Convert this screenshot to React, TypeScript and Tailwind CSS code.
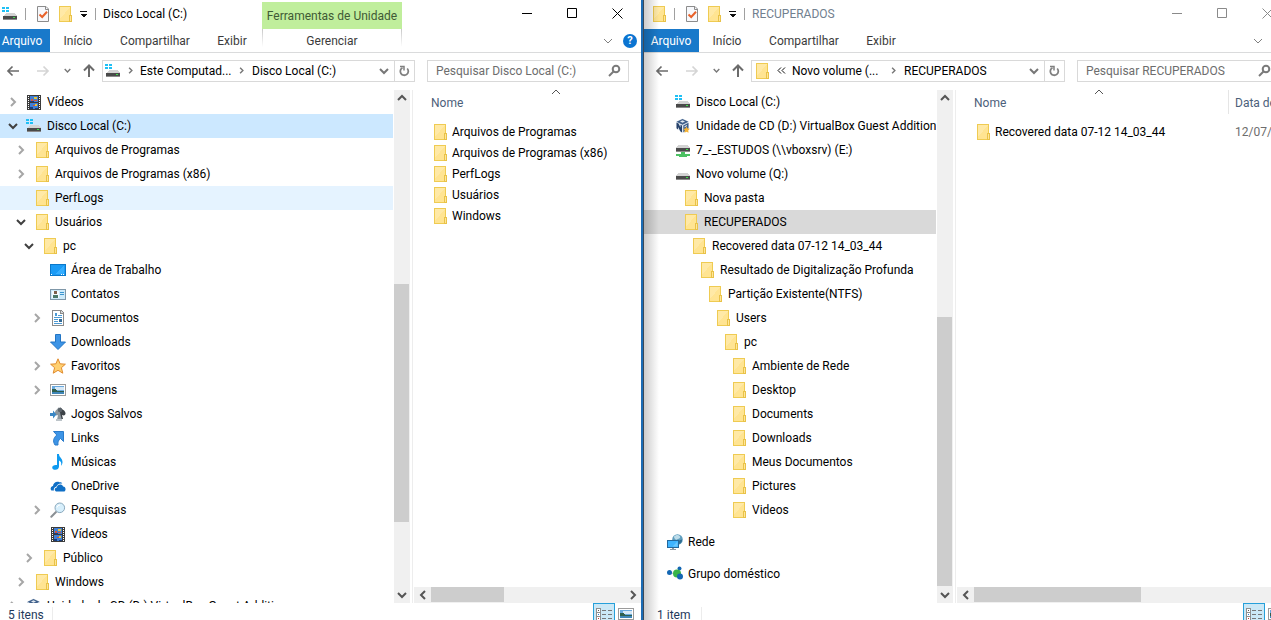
import type { ReactNode } from "react";

type IconName =
  | "folder"
  | "systemDrive"
  | "drive"
  | "netDrive"
  | "vbox"
  | "video"
  | "desktop"
  | "contacts"
  | "document"
  | "download"
  | "star"
  | "picture"
  | "games"
  | "link"
  | "music"
  | "onedrive"
  | "search"
  | "network"
  | "homegroup";

interface TreeItem {
  label: string;
  icon: IconName;
  depth: number;
  state?: "open" | "closed";
  tone?: "selected" | "hover" | "inactive";
  spaced?: boolean;
}

interface ExplorerProps {
  title: string;
  titleIcon: IconName;
  active: boolean;
  driveTools?: boolean;
  crumbs: string[];
  overflowCrumb?: boolean;
  tree: TreeItem[];
  columns: string;
  files: { name: string; date?: string }[];
  showDate?: boolean;
  status: string;
  vThumb: { top: number; size: number };
  hThumb: number;
}

const ICONS: Record<IconName, ReactNode> = {
  folder: (
    <g shapeRendering="crispEdges">
      <rect x="2" y="0" width="12" height="16" fill="#efcb52" />
      <rect x="3" y="1" width="10" height="14" fill="#ffe492" />
      <path d="M3 1h10L3 13z" fill="#ffe9a6" />
      <rect x="12" y="9" width="3" height="7" fill="#e9c248" />
      <rect x="13" y="10" width="1" height="5" fill="#ffe699" />
    </g>
  ),
  systemDrive: (
    <g shapeRendering="crispEdges">
      <path d="M0 1h3v2H0zM4 1h3v2H4zM0 4h3v2H0zM4 4h3v2H4z" fill="#1fc0f5" />
      <path d="M4 7h9l2 3H1z" fill="#d3d3d3" />
      <rect x="1" y="10" width="14" height="4" fill="#4a4a4a" />
      <rect x="1" y="13" width="14" height="1" fill="#8b8b8b" />
      <rect x="11" y="11" width="2" height="1" fill="#3ee04a" />
    </g>
  ),
  drive: (
    <g shapeRendering="crispEdges">
      <path d="M3 7h10l2 3H1z" fill="#d3d3d3" />
      <rect x="1" y="10" width="14" height="4" fill="#4a4a4a" />
      <rect x="1" y="13" width="14" height="1" fill="#8b8b8b" />
      <rect x="11" y="11" width="2" height="1" fill="#3ee04a" />
    </g>
  ),
  netDrive: (
    <g shapeRendering="crispEdges">
      <path d="M3 3h10l2 3H1z" fill="#d3d3d3" />
      <rect x="1" y="6" width="14" height="4" fill="#4a4a4a" />
      <rect x="1" y="9" width="14" height="1" fill="#8b8b8b" />
      <rect x="11" y="7" width="2" height="1" fill="#3ee04a" />
      <path d="M6 10h4v2h5v2h-3v1H4v-1H1v-2h5z" fill="#4cc163" />
    </g>
  ),
  vbox: (
    <g>
      <path d="M7.500 0.500L13.500 3.500V10L7.500 15L1.500 10.500V3.500Z" fill="#dfe7ef" />
      <path d="M7.500 1L13.500 3.800L7.500 6.800L1.500 3.800Z" fill="#3f5f8a" />
      <path d="M5 3.500L7.500 2.300L10 3.500L7.500 4.800Z" fill="#dfe7ef" />
      <path d="M1.500 4.500L3.500 5.500L5.500 9.500V6.800L7 7.500V14.500L5.500 13.500L3 9V11.500L1.500 10.300Z" fill="#27426b" />
      <path d="M8.300 7.500L13.500 4.800V10.500L8.300 14.500Z" fill="#3f5f8a" />
      <path d="M9.500 8.200L12 7V8L9.500 9.500Z" fill="#dfe7ef" />
      <path d="M11.500 8.500l1.100 2 2.200.3-1.600 1.600.4 2.300-2.100-1-2.100 1 .4-2.300-1.600-1.600 2.200-.3z" fill="#f5b335" />
    </g>
  ),
  video: (
    <g shapeRendering="crispEdges">
      <rect x="1" y="1" width="14" height="15" fill="#3b3b3b" />
      <path
        d="M2 2h1v1H2zM2 4h1v1H2zM2 6h1v1H2zM2 8h1v1H2zM2 10h1v1H2zM2 12h1v1H2zM2 14h1v1H2zM13 2h1v1h-1zM13 4h1v1h-1zM13 6h1v1h-1zM13 8h1v1h-1zM13 10h1v1h-1zM13 12h1v1h-1zM13 14h1v1h-1z"
        fill="#fff"
      />
      <rect x="4" y="2" width="8" height="6" fill="#3f7fd6" />
      <rect x="4" y="9" width="8" height="6" fill="#3f7fd6" />
      <path d="M8 3h3v2H8zM9 10h2v2H9z" fill="#e8c63a" />
      <path d="M5 5h2v2H5zM8 6h3v1H8zM7 11h2v1H7z" fill="#d4543b" />
      <path d="M4 7h4v1H4zM4 13h3v2H4zM9 14h3v1H9z" fill="#183d7c" />
    </g>
  ),
  desktop: (
    <g shapeRendering="crispEdges">
      <rect x="0" y="2" width="16" height="12" fill="#0b78c9" />
      <rect x="1" y="3" width="14" height="10" fill="#1b9bf5" />
      <path d="M14 3L5 12h9z" fill="#35aeff" />
      <path d="M1 12h1v1H1zM11 12h1v1h-1zM13 12h1v1h-1z" fill="#fff" />
    </g>
  ),
  contacts: (
    <g shapeRendering="crispEdges">
      <rect x="0" y="3" width="16" height="11" fill="#7f97a8" />
      <rect x="1" y="4" width="14" height="9" fill="#cdeafa" />
      <rect x="2" y="5" width="7" height="7" fill="#f3fafe" />
      <rect x="4" y="5" width="3" height="3" fill="#7d604c" />
      <path d="M3 9h5v3H3z" fill="#4b7868" />
      <path d="M10 6h4v1h-4zM10 8h4v1h-4z" fill="#3a94cf" />
    </g>
  ),
  document: (
    <g shapeRendering="crispEdges">
      <path d="M2 0h9l3 3v13H2z" fill="#8b8b8b" />
      <path d="M3 1h7v3h3v11H3z" fill="#fff" />
      <path d="M11 1l2 2h-2z" fill="#d8d8d8" />
      <path d="M5 3h2v3H5zM8 5h4v1H8zM4 7h8v1H4zM4 9h4v1H4zM4 11h4v1H4zM4 13h8v1H4z" fill="#4c9ad4" />
      <rect x="9" y="9" width="3" height="3" fill="#356b96" />
    </g>
  ),
  download: (
    <path d="M5.500 0.500h5v7.500h5L8 15.500L0.500 8h5z" fill="#3d94e6" stroke="#2275c4" />
  ),
  star: (
    <path
      d="M8 0.800l2.100 5 5.300.4-4 3.500 1.400 5.500L8 12.300l-4.800 2.900 1.400-5.500-4-3.500 5.300-.4z"
      fill="#ffd071"
      stroke="#e08b2e"
      strokeLinejoin="round"
    />
  ),
  picture: (
    <g shapeRendering="crispEdges">
      <rect x="0" y="2" width="16" height="12" fill="#9b9b9b" />
      <rect x="1" y="3" width="14" height="10" fill="#fff" />
      <rect x="2" y="4" width="12" height="7" fill="#6aa9de" />
      <rect x="5" y="5" width="9" height="3" fill="#d6e8f6" />
      <path d="M2 7h3l3 2h6v1H2z" fill="#2f5f4d" />
      <rect x="2" y="10" width="12" height="2" fill="#3f86b8" />
    </g>
  ),
  games: (
    <g>
      <path d="M10 1c1 2 5 3 5.500 6 .3 2-1.500 3-3.500 2l1 4H8z" fill="#3c4247" />
      <path d="M9 1c-1 2-4 3-4 6 0 2 1.500 3 3 2l-1 5h5l-1.500-5z" fill="#8d979e" />
      <circle cx="10" cy="4" r="2.200" fill="#5b646b" />
      <path d="M0 7h3V4.500L6.500 8.500 3 12.500V10H0z" fill="#3b87c4" />
      <path d="M6 13h6v2H6z" fill="#bcc4c9" />
    </g>
  ),
  link: (
    <path
      d="M3.500 1.500h10v10l-3-3c-2 1.500-3 3.500-2.500 6.500H5C2.500 11 3.500 8 6.800 5z"
      fill="#3d94e6"
      stroke="#2b7ccb"
    />
  ),
  music: (
    <path
      d="M7 0h2c0 3.500 3.500 4 3.500 8 0 1.500-.5 2.800-1.500 3.800.8-3-.2-4.600-2-5.300V12.500c0 2-1.700 3.300-3.500 3.300-2 0-3.300-.9-3.300-2.400C2.200 11.600 4.500 10.500 7 11z"
      fill="#0f9af0"
    />
  ),
  onedrive: (
    <g>
      <path d="M1.500 12.500C0 11 .6 8.500 3 8c.2-3 3.500-5.200 6.500-3.700 1-.4 2.300.2 2.800 1.200C9 5 7 6.500 6.500 8.500 4 9 3.400 11 4 12.500z" fill="#0f6fc6" />
      <path d="M6 13.500c-2-1-1.600-3.900.8-4.100.4-3.300 5-3.900 6.300-1 2.500 0 3.300 3.600 1.400 5.100z" fill="#0f6fc6" />
    </g>
  ),
  search: (
    <g>
      <path d="M6 10L1.300 14.700" stroke="#8a8f94" strokeWidth="2" strokeLinecap="round" />
      <circle cx="9.800" cy="5.800" r="4.800" fill="#d7effc" stroke="#8aa9bd" />
      <path d="M7 5.500a3 3 0 0 1 3-2.500" stroke="#fff" fill="none" />
    </g>
  ),
  network: (
    <g>
      <circle cx="10.500" cy="5.500" r="5.300" fill="#5f9dbd" />
      <path d="M7 2.500c2-2 5-2 6 0s-2 2-3 3-3-1-3-3z" fill="#bcdcea" />
      <path d="M12 6.500l3-1c.5 2-1 4-3 4.500z" fill="#2f6d92" />
      <rect x="0.500" y="6.500" width="11" height="7" fill="#3fb4ff" stroke="#24689c" />
      <path d="M10.500 7.500l-5 5h5z" fill="#6ac8ff" />
      <path d="M5 14h2v1h2v1H3v-1h2z" fill="#8f9aa3" />
    </g>
  ),
  homegroup: (
    <g>
      <path d="M2.500 7L10 7.500L12 2.500M10 7.500L13.500 11.500" stroke="#a9b4bd" />
      <circle cx="2.500" cy="6.500" r="2.500" fill="#1467b3" />
      <circle cx="12.500" cy="2.500" r="2" fill="#1467b3" />
      <circle cx="10" cy="7.500" r="4" fill="#39b54a" />
      <circle cx="13" cy="10.500" r="3" fill="#1467b3" />
    </g>
  ),
};

const Icon = ({ name }: { name: IconName }) => (
  <svg viewBox="0 0 16 16" fill="none" className="h-4 w-4 shrink-0" aria-hidden="true">
    {ICONS[name]}
  </svg>
);

const CHEVRONS = {
  up: "M1 6L5 2L9 6",
  down: "M1 3L5 7L9 3",
  left: "M7 1L3 5L7 9",
  right: "M3 1L7 5L3 9",
};

interface ChevronProps {
  dir: keyof typeof CHEVRONS;
  className?: string;
  weight?: number;
}

const Chevron = ({ dir, className = "h-[10px] w-[10px] text-[#555]", weight = 2 }: ChevronProps) => (
  <svg viewBox="0 0 10 10" fill="none" stroke="currentColor" strokeWidth={weight} className={className} aria-hidden="true">
    <path d={CHEVRONS[dir]} />
  </svg>
);

const TONES = {
  selected: "bg-[#cce8ff]",
  hover: "bg-[#e5f3ff]",
  inactive: "bg-[#d9d9d9]",
};

const TreeRow = ({ item }: { item: TreeItem }) => (
  <li className={item.spaced ? "mt-2" : ""}>
    <button
      className={`mr-px flex h-6 w-[calc(100%-1px)] items-center gap-[5px] overflow-hidden whitespace-nowrap text-left ${
        item.tone ? TONES[item.tone] : ""
      }`}
      style={{ paddingLeft: 3 + item.depth * 8 }}
    >
      <span className="flex w-4 shrink-0 justify-center">
        {item.state === "open" && <Chevron dir="down" className="h-[10px] w-[10px] text-[#404040]" />}
        {item.state === "closed" && <Chevron dir="right" className="h-[10px] w-[10px] text-[#a6a6a6]" />}
      </span>
      <Icon name={item.icon} />
      <span>{item.label}</span>
    </button>
  </li>
);

const VerticalScroll = ({ top, size }: { top: number; size: number }) => (
  <div className="flex min-h-0 flex-col bg-[#f0f0f0]">
    <button aria-label="Rolar para cima" className="flex h-[17px] shrink-0 items-center justify-center">
      <Chevron dir="up" />
    </button>
    <div className="min-h-0 flex-1">
      <div style={{ height: `${top}%` }} />
      <div className="mr-px bg-[#cdcdcd]" style={{ height: `${size}%` }} />
    </div>
    <button aria-label="Rolar para baixo" className="flex h-[17px] shrink-0 items-center justify-center">
      <Chevron dir="down" />
    </button>
  </div>
);

const HorizontalScroll = ({ size }: { size: number }) => (
  <div className="flex h-4 shrink-0 bg-[#f0f0f0]">
    <button aria-label="Rolar para a esquerda" className="flex w-[17px] shrink-0 items-center justify-center">
      <Chevron dir="left" />
    </button>
    <div className="flex-1 pb-px">
      <div className="h-full bg-[#cdcdcd]" style={{ width: `${size}%` }} />
    </div>
    <button aria-label="Rolar para a direita" className="flex w-[17px] shrink-0 items-center justify-center">
      <Chevron dir="right" />
    </button>
  </div>
);

const TitleBar = ({ title, titleIcon, active, driveTools }: ExplorerProps) => (
  <header className="flex h-[29px] shrink-0">
    <div className="flex w-[268px] items-center pb-px pl-2">
      <Icon name={titleIcon} />
      <span className="ml-[7px] h-3 w-px bg-[#a0a0a0]" />
      <button aria-label="Propriedades" className="ml-[9px]">
        <svg viewBox="0 0 16 16" fill="none" className="h-4 w-4" aria-hidden="true">
          <path d="M2.500 0.500H11L13.500 3V15.500H2.500Z" fill="#f7f8fb" stroke="#8c8c8c" />
          <path d="M10.500 0.500V3.500H13.500" stroke="#8c8c8c" />
          <path d="M4.500 8.500L7.200 11L12 5.800" stroke="#e8622a" strokeWidth="2" />
        </svg>
      </button>
      <button aria-label="Nova pasta" className="ml-[6px]">
        <Icon name="folder" />
      </button>
      <button aria-label="Personalizar" className="ml-[7px]">
        <svg viewBox="0 0 8 8" className="h-2 w-2" aria-hidden="true" shapeRendering="crispEdges">
          <path d="M0 1h7v1H0zM0 4h7L3.500 7.500z" fill="#111" />
        </svg>
      </button>
      <span className="ml-[7px] h-3 w-px bg-[#a0a0a0]" />
      <h1 className={`ml-[7px] whitespace-nowrap ${active ? "text-black" : "text-[#71808f]"}`}>{title}</h1>
    </div>
    {driveTools && (
      <div className="mt-[2px] flex w-[140px] items-center justify-center bg-[#c0ee9c] whitespace-nowrap text-[#3f5a35]">
        Ferramentas de Unidade
      </div>
    )}
    <div className={`ml-auto flex pr-px pb-[3px] ${active ? "text-black" : "text-[#8a8a8a]"}`}>
      <button aria-label="Minimizar" className="flex w-[45px] items-center justify-center">
        <svg viewBox="0 0 11 11" className="h-[11px] w-[11px]" stroke="currentColor">
          <path d="M0 5.500H10" />
        </svg>
      </button>
      <button aria-label="Maximizar" className="flex w-[45px] items-center justify-center">
        <svg viewBox="0 0 11 11" className="h-[11px] w-[11px]" stroke="currentColor" fill="none">
          <path d="M0.500 0.500H9.500V9.500H0.500Z" />
        </svg>
      </button>
      <button aria-label="Fechar" className="flex w-[45px] items-center justify-center">
        <svg viewBox="0 0 11 11" className="h-[11px] w-[11px]" stroke="currentColor">
          <path d="M0.500 0.500L10.500 10.500M10.500 0.500L0.500 10.500" />
        </svg>
      </button>
    </div>
  </header>
);

const Ribbon = ({ driveTools }: { driveTools?: boolean }) => (
  <nav className="flex h-6 shrink-0 border-b border-[#dadbdc] text-[#3b3b3b]">
    <button className="w-14 bg-[#1979ca] text-white">Arquivo</button>
    <button className="w-14">Início</button>
    <button className="w-[98px]">Compartilhar</button>
    <button className="w-14">Exibir</button>
    {driveTools && (
      <div className="ml-[2px] flex w-[140px] justify-between">
        <span className="h-[18px] w-px bg-linear-to-b from-[#c8c8c8] to-white" />
        <button className="flex-1">Gerenciar</button>
        <span className="h-[18px] w-px bg-linear-to-b from-[#c8c8c8] to-white" />
      </div>
    )}
    <div className="ml-auto flex items-center gap-[10px] pr-1">
      <button aria-label="Expandir faixa de opções">
        <Chevron dir="down" weight={1} className="h-[10px] w-[10px] text-[#808080]" />
      </button>
      <button
        aria-label="Ajuda"
        className="flex h-[14px] w-[14px] items-center justify-center rounded-full bg-[#0b74d1] text-[11px] font-bold text-white"
      >
        ?
      </button>
    </div>
  </nav>
);

const AddressRow = ({ titleIcon, crumbs, overflowCrumb }: ExplorerProps) => (
  <div className="flex h-[37px] shrink-0 items-center pr-3 pb-[2px] pl-2">
    <button aria-label="Voltar" className="flex w-[22px] justify-center text-[#6b6b6b]">
      <svg viewBox="0 0 14 12" className="h-3 w-[14px]" fill="none" stroke="currentColor" strokeWidth="1.700">
        <path d="M13 6H2M6.500 1.500L2 6L6.500 10.500" />
      </svg>
    </button>
    <button aria-label="Avançar" className="ml-2 flex w-[22px] justify-center text-[#d5d5d5]">
      <svg viewBox="0 0 14 12" className="h-3 w-[14px]" fill="none" stroke="currentColor" strokeWidth="1.700">
        <path d="M1 6H12M7.500 1.500L12 6L7.500 10.500" />
      </svg>
    </button>
    <button aria-label="Locais recentes" className="flex w-[26px] justify-center">
      <Chevron dir="down" className="h-[7px] w-[7px] text-[#777]" />
    </button>
    <button aria-label="Acima" className="mr-1 flex w-[18px] justify-center text-[#6b6b6b]">
      <svg viewBox="0 0 12 13" className="h-[13px] w-3" fill="none" stroke="currentColor" strokeWidth="2">
        <path d="M6 13V2M1 6.500L6 1.500L11 6.500" />
      </svg>
    </button>
    <div className="flex h-[22px] min-w-0 flex-1 items-center border border-[#d9d9d9] pl-[2px] whitespace-nowrap">
      <Icon name={titleIcon} />
      {overflowCrumb ? (
        <button className="flex w-[22px] justify-center" aria-label="Pastas anteriores">
          <svg viewBox="0 0 9 7" className="h-[7px] w-[9px]" fill="none" stroke="#111">
            <path d="M4 0.500L1 3.500L4 6.500M8 0.500L5 3.500L8 6.500" />
          </svg>
        </button>
      ) : (
        <span className="flex w-[19px] justify-center">
          <Chevron dir="right" className="h-[7px] w-[7px] text-[#777]" />
        </span>
      )}
      <button className="w-[90px] text-left">{crumbs[0]}</button>
      <span className="flex w-[22px] justify-center">
        <Chevron dir="right" className="h-[7px] w-[7px] text-[#777]" />
      </span>
      <button>{crumbs[1]}</button>
      <button aria-label="Locais anteriores" className="ml-auto flex w-5 justify-center">
        <Chevron dir="down" className="h-[10px] w-[10px] text-[#777]" />
      </button>
      <button aria-label="Atualizar" className="flex h-full w-5 items-center justify-center border-l border-[#d9d9d9]">
        <svg viewBox="0 0 11 12" className="h-3 w-[11px]" fill="none" stroke="#808080" strokeWidth="1.800">
          <path d="M3.500 2.700A4 4 0 1 0 8.200 3.500" />
          <path d="M1 1.500H5V5.500" strokeWidth="1.500" />
        </svg>
      </button>
    </div>
    <label className="ml-3 flex h-[22px] w-[202px] shrink-0 items-center border border-[#d9d9d9] pr-[7px] pl-2">
      <input
        aria-label={`Pesquisar ${crumbs[1]}`}
        placeholder={`Pesquisar ${crumbs[1]}`}
        className="min-w-0 flex-1 outline-none placeholder:text-[#6d6d6d]"
      />
      <svg viewBox="0 0 13 13" className="h-[13px] w-[13px]" fill="none" stroke="#7a7a7a" strokeWidth="2">
        <circle cx="8" cy="5" r="3.300" />
        <path d="M5.500 7.500L1 12" />
      </svg>
    </label>
  </div>
);

const FilePane = ({ files, showDate, hThumb }: ExplorerProps) => (
  <main className="ml-[2px] flex min-w-0 flex-col overflow-hidden border-l border-[#ededed] pl-px">
    <div className="min-h-0 flex-1 overflow-hidden pl-[11px]">
      <table className="w-full table-fixed text-left whitespace-nowrap">
        <thead className="text-[#4c607a]">
          <tr>
            <th className="relative w-[261px] p-0 font-normal">
              <Chevron
                dir="up"
                weight={1}
                className="absolute -top-[2px] left-1/2 h-[10px] w-[10px] -translate-x-1/2 text-[#555]"
              />
              <div className="mb-[7px] flex h-6 items-center border-r border-[#e5e5e5] pt-[2px] pl-[6px]">Nome</div>
            </th>
            {showDate && (
              <th className="p-0 font-normal">
                <div className="mb-[7px] flex h-6 items-center pt-[2px] pl-[6px]">Data de</div>
              </th>
            )}
          </tr>
        </thead>
        <tbody>
          {files.map((file) => (
            <tr key={file.name} className="h-[21px]">
              <td className="p-0">
                <div className="flex items-center gap-1 pl-[7px]">
                  <Icon name="folder" />
                  {file.name}
                </div>
              </td>
              {showDate && <td className="p-0 pl-[6px] text-[#6d6d6d]">{file.date}</td>}
            </tr>
          ))}
        </tbody>
      </table>
    </div>
    <HorizontalScroll size={hThumb} />
  </main>
);

const StatusBar = ({ status }: { status: string }) => (
  <footer className="flex h-[25px] shrink-0 items-center pr-1 pb-[2px] pl-[14px] text-[#1e395b]">
    <span className="w-11 whitespace-nowrap">{status}</span>
    <span className="h-4 w-px bg-[#ececec]" />
    <button
      aria-label="Detalhes"
      className="ml-auto flex h-[22px] w-[22px] items-center justify-center self-start border border-[#26a0da] bg-[#cbe8f6]"
    >
      <svg viewBox="0 0 16 13" className="h-[13px] w-4" shapeRendering="crispEdges">
        <path d="M0 0h5v13H0z" fill="#8f8f8f" />
        <path d="M1 1h3v3H1zM1 5h3v3H1zM1 9h3v3H1z" fill="#fff" />
        <path d="M2 2h1v1H2z" fill="#555" />
        <path d="M2 6h1v1H2z" fill="#2a7bd0" />
        <path d="M2 10h1v1H2z" fill="#d0302a" />
        <path d="M6 2h4v1H6zM12 2h4v1h-4zM6 6h4v1H6zM12 6h4v1h-4zM6 10h4v1H6zM12 10h4v1h-4z" fill="#777" />
      </svg>
    </button>
    <button aria-label="Miniaturas" className="flex h-[22px] w-[22px] items-center justify-center self-start">
      <Icon name="picture" />
    </button>
  </footer>
);

const Explorer = (props: ExplorerProps) => (
  <section className="flex h-[calc(100%+8px)] flex-col">
    <TitleBar {...props} />
    <Ribbon driveTools={props.driveTools} />
    <AddressRow {...props} />
    <div className={`grid min-h-0 flex-1 ${props.columns}`}>
      <ul className="min-h-0 min-w-0 overflow-hidden">
        {props.tree.map((item, i) => (
          <TreeRow key={i} item={item} />
        ))}
      </ul>
      <VerticalScroll {...props.vThumb} />
      <FilePane {...props} />
    </div>
    <StatusBar status={props.status} />
  </section>
);

const LOCAL_TREE: TreeItem[] = [
  { label: "Vídeos", icon: "video", depth: 1, state: "closed" },
  { label: "Disco Local (C:)", icon: "systemDrive", depth: 1, state: "open", tone: "selected" },
  { label: "Arquivos de Programas", icon: "folder", depth: 2, state: "closed" },
  { label: "Arquivos de Programas (x86)", icon: "folder", depth: 2, state: "closed" },
  { label: "PerfLogs", icon: "folder", depth: 2, tone: "hover" },
  { label: "Usuários", icon: "folder", depth: 2, state: "open" },
  { label: "pc", icon: "folder", depth: 3, state: "open" },
  { label: "Área de Trabalho", icon: "desktop", depth: 4 },
  { label: "Contatos", icon: "contacts", depth: 4 },
  { label: "Documentos", icon: "document", depth: 4, state: "closed" },
  { label: "Downloads", icon: "download", depth: 4 },
  { label: "Favoritos", icon: "star", depth: 4, state: "closed" },
  { label: "Imagens", icon: "picture", depth: 4, state: "closed" },
  { label: "Jogos Salvos", icon: "games", depth: 4 },
  { label: "Links", icon: "link", depth: 4 },
  { label: "Músicas", icon: "music", depth: 4 },
  { label: "OneDrive", icon: "onedrive", depth: 4 },
  { label: "Pesquisas", icon: "search", depth: 4, state: "closed" },
  { label: "Vídeos", icon: "video", depth: 4 },
  { label: "Público", icon: "folder", depth: 3, state: "closed" },
  { label: "Windows", icon: "folder", depth: 2, state: "closed" },
  { label: "Unidade de CD (D:) VirtualBox Guest Additions", icon: "vbox", depth: 1, state: "closed" },
];

const RECOVERED_TREE: TreeItem[] = [
  { label: "Disco Local (C:)", icon: "systemDrive", depth: 1 },
  { label: "Unidade de CD (D:) VirtualBox Guest Additions", icon: "vbox", depth: 1 },
  { label: "7_-_ESTUDOS (\\\\vboxsrv) (E:)", icon: "netDrive", depth: 1 },
  { label: "Novo volume (Q:)", icon: "drive", depth: 1 },
  { label: "Nova pasta", icon: "folder", depth: 2 },
  { label: "RECUPERADOS", icon: "folder", depth: 2, tone: "inactive" },
  { label: "Recovered data 07-12 14_03_44", icon: "folder", depth: 3 },
  { label: "Resultado de Digitalização Profunda", icon: "folder", depth: 4 },
  { label: "Partição Existente(NTFS)", icon: "folder", depth: 5 },
  { label: "Users", icon: "folder", depth: 6 },
  { label: "pc", icon: "folder", depth: 7 },
  { label: "Ambiente de Rede", icon: "folder", depth: 8 },
  { label: "Desktop", icon: "folder", depth: 8 },
  { label: "Documents", icon: "folder", depth: 8 },
  { label: "Downloads", icon: "folder", depth: 8 },
  { label: "Meus Documentos", icon: "folder", depth: 8 },
  { label: "Pictures", icon: "folder", depth: 8 },
  { label: "Videos", icon: "folder", depth: 8 },
  { label: "Rede", icon: "network", depth: 0, spaced: true },
  { label: "Grupo doméstico", icon: "homegroup", depth: 0, spaced: true },
];

const LOCAL_FILES = [
  { name: "Arquivos de Programas" },
  { name: "Arquivos de Programas (x86)" },
  { name: "PerfLogs" },
  { name: "Usuários" },
  { name: "Windows" },
];

const App = () => (
  <div className="grid h-screen grid-cols-[643fr_628fr] overflow-hidden bg-white font-['Roboto','Noto_Sans',sans-serif] text-[12px] leading-4 text-black">
    <div className="min-w-0 overflow-hidden border-r border-[#1b6cb5]">
      <div className="-ml-[6px] h-full border-r border-[#1b6cb5]">
        <Explorer
          title="Disco Local (C:)"
          titleIcon="systemDrive"
          active
          driveTools
          crumbs={["Este Computad...", "Disco Local (C:)"]}
          tree={LOCAL_TREE}
          columns="grid-cols-[400fr_16px_231fr]"
          files={LOCAL_FILES}
          status="5 itens"
          vThumb={{ top: 37, size: 49.7 }}
          hThumb={38}
        />
      </div>
    </div>
    <div className="relative min-w-0 overflow-hidden">
      <div className="-mr-5 h-full">
        <Explorer
          title="RECUPERADOS"
          titleIcon="folder"
          active={false}
          crumbs={["Novo volume (...", "RECUPERADOS"]}
          overflowCrumb
          tree={RECOVERED_TREE}
          columns="grid-cols-[294fr_16px_338fr]"
          files={[{ name: "Recovered data 07-12 14_03_44", date: "12/07/2017" }]}
          showDate
          status="1 item"
          vThumb={{ top: 43.8, size: 56.2 }}
          hThumb={55.5}
        />
      </div>
      {/* Shadow cast by the active window */}
      <div className="pointer-events-none absolute inset-y-0 left-0 w-4 border-l border-[#3a4a5a] bg-linear-to-r from-black/20 to-transparent" />
    </div>
  </div>
);

export default App;
